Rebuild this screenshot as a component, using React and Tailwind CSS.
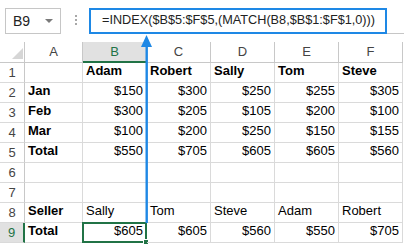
import React from "react";

const cols = ["A", "B", "C", "D", "E", "F"];

const rows = [
  { n: 1, cells: [{ t: "" }, { t: "Adam", b: 1 }, { t: "Robert", b: 1 }, { t: "Sally", b: 1 }, { t: "Tom", b: 1 }, { t: "Steve", b: 1 }] },
  { n: 2, cells: [{ t: "Jan", b: 1 }, { t: "$150", r: 1 }, { t: "$300", r: 1 }, { t: "$250", r: 1 }, { t: "$255", r: 1 }, { t: "$305", r: 1 }] },
  { n: 3, cells: [{ t: "Feb", b: 1 }, { t: "$300", r: 1 }, { t: "$205", r: 1 }, { t: "$105", r: 1 }, { t: "$200", r: 1 }, { t: "$100", r: 1 }] },
  { n: 4, cells: [{ t: "Mar", b: 1 }, { t: "$100", r: 1 }, { t: "$200", r: 1 }, { t: "$250", r: 1 }, { t: "$150", r: 1 }, { t: "$155", r: 1 }] },
  { n: 5, cells: [{ t: "Total", b: 1 }, { t: "$550", r: 1 }, { t: "$705", r: 1 }, { t: "$605", r: 1 }, { t: "$605", r: 1 }, { t: "$560", r: 1 }] },
  { n: 6, cells: [{ t: "" }, { t: "" }, { t: "" }, { t: "" }, { t: "" }, { t: "" }] },
  { n: 7, cells: [{ t: "" }, { t: "" }, { t: "" }, { t: "" }, { t: "" }, { t: "" }] },
  { n: 8, cells: [{ t: "Seller", b: 1 }, { t: "Sally" }, { t: "Tom" }, { t: "Steve" }, { t: "Adam" }, { t: "Robert" }] },
  { n: 9, cells: [{ t: "Total", b: 1 }, { t: "$605", r: 1 }, { t: "$605", r: 1 }, { t: "$560", r: 1 }, { t: "$550", r: 1 }, { t: "$705", r: 1 }] },
];

export default function App() {
  return (
    <div className="relative w-[404px] h-[246px] overflow-hidden bg-white font-['Liberation_Sans',Arial,sans-serif]">
      {/* formula bar */}
      <div className="flex h-[42px] items-start pt-[8px]">
        <div className="ml-[5px] flex h-[26px] w-[56px] items-center justify-between border border-[#c6c6c6] pl-[7px] pr-[7px]">
          <span className="text-[14px] text-[#222]">B9</span>
          <svg width="8" height="4" viewBox="0 0 8 4">
            <polygon points="0,0 8,0 4,4" fill="#7a7a7a" />
          </svg>
        </div>
        <div className="ml-[14px] mt-[7px] flex flex-col gap-[2px]">
          <span className="h-[2px] w-[2px] bg-[#a8a8a8]" />
          <span className="h-[2px] w-[2px] bg-[#a8a8a8]" />
          <span className="h-[2px] w-[2px] bg-[#a8a8a8]" />
        </div>
        <div className="ml-[12px] flex h-[26px] flex-1 border-b border-[#c6c6c6]">
          <div className="flex h-[26px] w-[298px] items-center whitespace-nowrap border-2 border-[#1e88e5] pl-[11px] text-[12.7px] text-[#222]">
            =INDEX($B$5:$F$5,(MATCH(B8,$B$1:$F$1,0)))
          </div>
        </div>
      </div>

      {/* sheet */}
      <div className="grid grid-cols-[25px_58px_64px_64px_64px_64px_64px] text-[13px]">
        <div className="relative h-[21px] border-r border-b border-[#c8c8c8]">
          <svg className="absolute left-[12px] top-[6px]" width="11" height="11" viewBox="0 0 11 11">
            <polygon points="11,0 11,11 0,11" fill="#d6d6d6" />
          </svg>
        </div>
        {cols.map((c) => (
          <div
            key={c}
            className={
              c === "B"
                ? "flex h-[21px] items-center justify-center border-r border-b-2 border-r-[#c8c8c8] border-b-[#217346] bg-[#e1e1e1] text-[#217346]"
                : "flex h-[21px] items-center justify-center border-r border-b border-[#c8c8c8] text-[#444]"
            }
          >
            {c}
          </div>
        ))}

        {rows.map((row) => (
          <React.Fragment key={row.n}>
            <div
              className={
                row.n === 9
                  ? "flex h-[20px] items-center justify-center border-b border-r-2 border-b-[#dadada] border-r-[#217346] bg-[#e1e1e1] text-[#217346]"
                  : "flex h-[20px] items-center justify-center border-r border-b border-r-[#c8c8c8] border-b-[#dadada] text-[#444]"
              }
            >
              {row.n}
            </div>
            {row.cells.map((cell, i) => (
              <div
                key={i}
                className={[
                  "relative flex h-[20px] items-end whitespace-nowrap border-r border-b border-[#dadada] px-[3px] pb-[2px] text-black",
                  cell.r ? "justify-end" : "justify-start",
                  cell.b ? "font-bold" : "",
                ].join(" ")}
              >
                {cell.t}
                {row.n === 9 && i === 1 && (
                  <div className="absolute -top-[1px] -left-[1px] -right-[1px] -bottom-[1px] border-2 border-[#217346]">
                    <span className="absolute -right-[4px] -bottom-[4px] h-[6px] w-[6px] border border-white bg-[#217346]" />
                  </div>
                )}
              </div>
            ))}
          </React.Fragment>
        ))}
      </div>

      {/* arrow from formula to lookup row */}
      <svg className="absolute left-[141px] top-[35px]" width="11" height="188" viewBox="0 0 11 188">
        <polygon points="5.5,0 11,12 0,12" fill="#1e88e5" />
        <rect x="4.5" y="10" width="2.4" height="178" fill="#1e88e5" />
      </svg>
    </div>
  );
}
